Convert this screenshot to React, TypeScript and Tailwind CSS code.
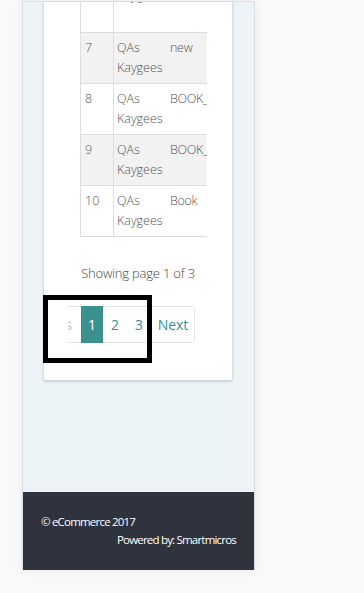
import React from "react";

const rows = [
  { id: "6", a: ["QAs", "Kaygees"], b: "", striped: false, h: "h-[72px]" },
  { id: "7", a: ["QAs", "Kaygees"], b: "new", striped: true, h: "h-[51px]" },
  { id: "8", a: ["QAs", "Kaygees"], b: "BOOK_1", striped: false, h: "h-[51px]" },
  { id: "9", a: ["QAs", "Kaygees"], b: "BOOK_1", striped: true, h: "h-[51px]" },
  { id: "10", a: ["QAs", "Kaygees"], b: "Book", striped: false, h: "h-[51px]" },
];

export default function App() {
  return (
    <div
      className="relative w-[364px] h-[593px] bg-[#f9f9f9] overflow-hidden"
      style={{ fontFamily: '"Open Sans", "Noto Sans", sans-serif' }}
    >
      <div className="ml-[22px] mt-[1px] w-[233px] h-[569px] flex flex-col border-x border-t border-[#d9dee2] bg-[#ecf4f8] overflow-hidden shadow-[0_0_10px_rgba(0,0,0,0.07)]">
        <div className="flex-1 overflow-hidden">
          <div className="ml-[21px] w-[188px] -mt-[1px] bg-white shadow-[0_1px_3px_rgba(0,0,0,0.22)] flex flex-col pb-[37px]">
            {/* table */}
            <div className="ml-[36px] w-[127px] overflow-hidden -mt-[41px]">
              <div className="w-[320px] border-l border-b border-[#dddddd] text-[12.5px] leading-[20px] font-light text-[#555]">
                {rows.map((r) => (
                  <div
                    key={r.id}
                    className={`flex border-t border-[#dddddd] ${r.h} ${r.striped ? "bg-[#f2f2f2]" : "bg-white"}`}
                  >
                    <div className="w-[33px] shrink-0 border-r border-[#dddddd] pl-[4px] pt-[5px]">
                      {r.id}
                    </div>
                    <div className="w-[51px] shrink-0 pl-[3px] pt-[5px]">
                      <div>{r.a[0]}</div>
                      <div>{r.a[1]}</div>
                    </div>
                    <div className="w-[120px] shrink-0 pl-[5px] pt-[5px] whitespace-nowrap tracking-[-0.3px]">
                      {r.b}
                    </div>
                  </div>
                ))}
              </div>
            </div>
            {/* showing */}
            <div className="mt-[26px] text-center text-[13px] leading-[20px] text-[#444] font-light tracking-[-0.2px]">
              Showing page 1 of 3
            </div>
            {/* pagination */}
            <div className="mt-[23px] ml-[24px] w-[140px] overflow-hidden">
              <div className="flex -ml-[55px] text-[14px] leading-[35px] text-[#3a9190]">
                <div className="w-[68px] shrink-0 text-right pr-[9px] border-y border-[#e3e3e3] text-[#bbb]">
                  Previous
                </div>
                <div className="w-[22px] shrink-0 text-center bg-[#3a9190] text-white border-y border-[#3a9190]">
                  1
                </div>
                <div className="w-[24px] shrink-0 text-center border-y border-[#e3e3e3]">2</div>
                <div className="w-[24px] shrink-0 text-center border-y border-[#e3e3e3]">3</div>
                <div className="w-[44px] shrink-0 text-center border border-[#e3e3e3] rounded-r-[4px]">
                  Next
                </div>
              </div>
            </div>
          </div>
        </div>
        <footer className="h-[78px] shrink-0 bg-[#2f333d] text-white text-[11.5px] leading-[18px] tracking-[-0.8px] pt-[21px] pl-[18px] pr-[18px]">
          <div>© eCommerce 2017</div>
          <div className="text-right">Powered by: Smartmicros</div>
        </footer>
      </div>
      {/* highlight box */}
      <div className="absolute left-[43px] top-[295px] w-[109px] h-[68px] border-[5px] border-black" />
    </div>
  );
}
